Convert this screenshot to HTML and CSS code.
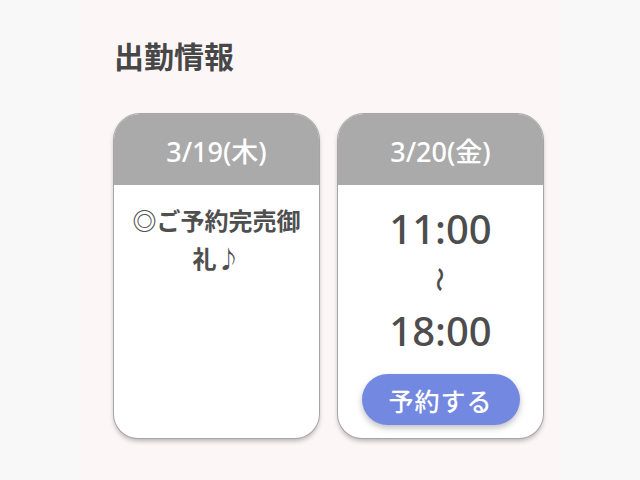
FILE: index.html
```html
<!DOCTYPE html>
<html lang="ja">
<head>
<meta charset="utf-8">
<link rel="stylesheet" href="styles.css">
</head>
<body>
<main class="panel">
  <h1 class="title">出勤情報</h1>
  <div class="cards">
    <section class="card">
      <div class="card-head">3/19(木)</div>
      <div class="card-body">
        <p class="note">◎ご予約完売御礼♪</p>
      </div>
    </section>
    <section class="card">
      <div class="card-head">3/20(金)</div>
      <div class="card-body times">
        <div class="time">11:00</div>
        <div class="tilde">〜</div>
        <div class="time">18:00</div>
        <button class="reserve">予約する</button>
      </div>
    </section>
  </div>
</main>
</body>
</html>
```
FILE: styles.css
```css
html, body {
  margin: 0;
  padding: 0;
  background: #f8f8f8;
  font-family: "Noto Sans CJK JP", sans-serif;
}
.panel {
  margin-left: 80px;
  width: 480px;
  height: 480px;
  box-sizing: border-box;
  background: #fcf7f6;
  border-top-left-radius: 14px;
  padding: 37px 0 0 34px;
  overflow: hidden;
}
.title {
  margin: 0;
  font-size: 30px;
  line-height: 36px;
  font-weight: 700;
  color: #474747;
}
.cards {
  margin-top: 41px;
  display: flex;
  gap: 19px;
}
.card {
  flex: 0 0 205px;
  height: 324px;
  box-sizing: border-box;
  background: #fff;
  border-radius: 26px 26px 24px 24px;
  overflow: hidden;
  box-shadow: 0 0 0 1px #a6a6a6, 0 3px 5px rgba(0,0,0,0.28);
  display: flex;
  flex-direction: column;
}
.card-head {
  height: 71px;
  background: #aaaaaa;
  color: #fff;
  font-family: "Noto Sans", "Noto Sans CJK JP", sans-serif;
  font-size: 27px;
  font-weight: 500;
  display: flex;
  align-items: center;
  justify-content: center;
  padding-top: 2px;
  box-sizing: border-box;
}
.card-body {
  flex: 1;
  text-align: center;
}
.note {
  margin: 16px 0 0;
  padding: 0 12px;
  font-size: 24px;
  line-height: 38px;
  font-weight: 700;
  color: #4f4f4f;
}
.times {
  display: flex;
  flex-direction: column;
  align-items: center;
  padding-top: 18px;
}
.time {
  font-family: "Noto Sans", "Noto Sans CJK JP", sans-serif;
  font-size: 40px;
  line-height: 51px;
  color: #4d4d4d;
  font-weight: 500;
}
.tilde {
  height: 51px;
  line-height: 51px;
  font-size: 25px;
  font-weight: 700;
  color: #4d4d4d;
  transform: rotate(90deg) scaleY(0.8);
}
.reserve {
  margin-top: 18px;
  width: 158px;
  height: 51px;
  border: none;
  border-radius: 26px;
  background: #7388e0;
  color: #fff;
  font-family: "Noto Sans CJK JP", sans-serif;
  font-size: 25px;
  letter-spacing: 1px;
  font-weight: 500;
  padding: 0;
  box-shadow: 0 3px 6px rgba(0,0,0,0.25);
}
```
